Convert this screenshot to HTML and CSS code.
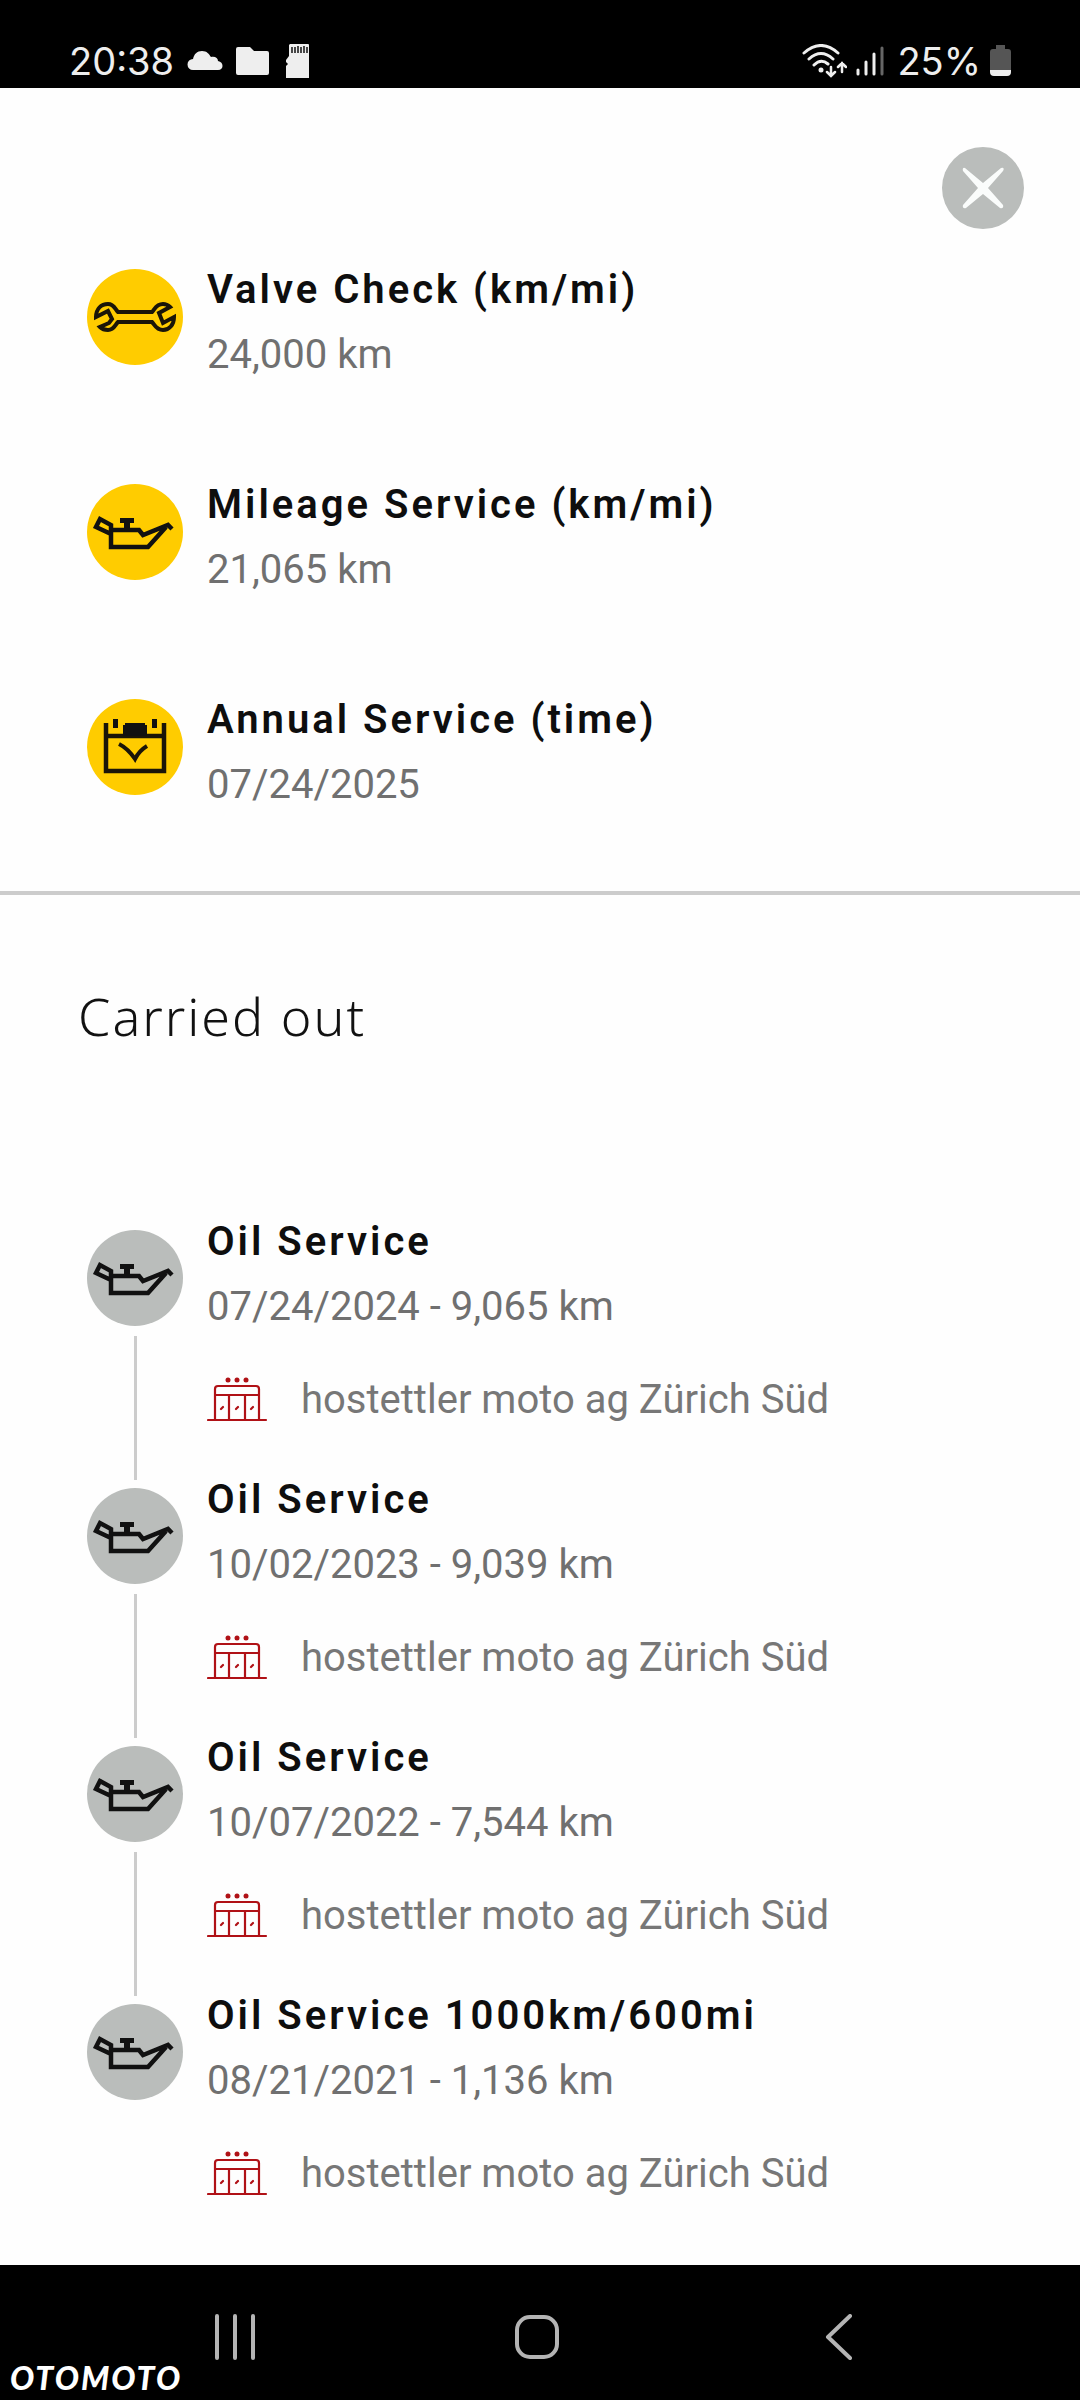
FILE: index.html
```
<!DOCTYPE HTML>
<html lang="en">
<head>
    <meta charset="UTF-8">
    <title>Service history</title>
    <meta name="viewport" content="width=device-width">
    <link rel="stylesheet" href="styles.css">
</head>
<body>
    <!-- icons -->
    <svg class="sprite" aria-hidden="true">
        <symbol id="wrench" viewBox="0 0 96 96">
            <path d="M9 48C9 40 14 35 21 35C27 35 28 40 31 43H65C68 40 69 35 76 35C79 35 81 36 83 38L72 44L76 54L87 48C87 56 82 61 76 61C69 61 68 56 65 53H31C28 56 27 61 21 61C17 61 15 60 13 58L22 54L25 50L21 42Z" fill="none" stroke="#1a1508" stroke-width="4" stroke-linejoin="miter"/>
        </symbol>
        <symbol id="oil" viewBox="0 0 96 96">
            <path d="M24 46H52L56 51L81 41L85 45M79 43L61 63H24V41L13 35L9 43L24 50" fill="none" stroke="#111" stroke-width="4.500"/>
            <path d="M33 34H47V39H43V46H37V39H33Z" fill="#111"/>
        </symbol>
        <symbol id="calendar" viewBox="0 0 96 96">
            <path d="M19 24V72H77V24M19 37H77" fill="none" stroke="#1a1508" stroke-width="4.500"/>
            <path d="M26 20H31V29H26ZM65 20H70V29H65ZM38 24H58V26H60V37H36V26H38Z" fill="#111"/>
            <path d="M32 45C38 48 44 54 48 60C51 54 55 50 60 47" fill="none" stroke="#1a1508" stroke-width="4"/>
        </symbol>
        <symbol id="shop" viewBox="0 0 61 46">
            <g fill="none" stroke="#b01116" stroke-width="2.200">
                <path d="M8 43V12Q8 9 11 9H49Q52 9 52 12V43M8 18H52M22 18V43M38 18V43"/>
                <path d="M1 43H59M14 32L16 30M29 32L31 30M44 32L46 30" stroke-linecap="round"/>
            </g>
            <g fill="#b01116">
                <circle cx="21" cy="3" r="2.500"/>
                <circle cx="30" cy="3" r="2.500"/>
                <circle cx="39" cy="3" r="2.500"/>
            </g>
        </symbol>
    </svg>

    <div class="status">
        <div class="status-left">
            <span class="time">20:38</span>
            <svg width="36" height="34" viewBox="0 0 36 34"><path d="M6 26A5.500 5.500 0 0 1 6 15C7 10 10 7 15 7C20 7 22 10 24 13C28 12 31 14 31 17C37 18 37 26 31 26Z" fill="#eee"/></svg>
            <svg width="33" height="34" viewBox="0 0 33 34"><path d="M2 3H14L18 7H31Q33 7 33 9V29Q33 31 31 31H2Q0 31 0 29V5Q0 3 2 3Z" fill="#eee"/></svg>
            <svg width="23" height="34" viewBox="0 0 23 34"><path d="M4 0H22Q23 0 23 1V34H0V22L2 20L0 18V16L3 12V1Z" fill="#eee"/><path d="M6 3V9M9 3V9M12 2V9M15 3V9M18 2V9M21 3V9" stroke="#111" stroke-width="1.500"/></svg>
        </div>
        <div class="status-right">
            <svg width="45" height="34" viewBox="0 0 45 34">
                <g fill="none" stroke="#eee" stroke-width="3" stroke-linecap="round">
                    <path d="M2 9Q19 -6 36 9M7 15Q19 4 31 15M12 21Q19 14 26 20"/>
                    <path d="M29 23V31M25 28L29 32L33 28M40 28V19M36 23L40 19L44 23" stroke-width="2.500"/>
                </g>
                <circle cx="19" cy="26" r="2.500" fill="#eee"/>
            </svg>
            <svg width="28" height="34" viewBox="0 0 28 34">
                <path d="M2 26V30M10 18V30M18 10V30" stroke="#eee" stroke-width="3" stroke-linecap="round"/>
                <path d="M26 4V30" stroke="#666" stroke-width="3" stroke-linecap="round"/>
            </svg>
            <span class="battery">25%</span>
            <svg width="21" height="34" viewBox="0 0 21 34">
                <path d="M6 1H15V5H18Q21 5 21 8V26H0V8Q0 5 3 5H6Z" fill="#555"/>
                <path d="M0 26H21V28Q21 32 17 32H4Q0 32 0 28Z" fill="#eee"/>
            </svg>
        </div>
    </div>

    <main class="content">
        <div class="top">
            <button class="close" type="button" aria-label="Close">
                <svg width="42" height="42" viewBox="0 0 42 42"><path d="M3 1L21 16L39 1Q43 0 41 4L26 21L41 38Q42 42 38 41L21 27L4 41Q0 42 1 38L16 21L1 4Q0 0 3 1Z" fill="#fafcfb"/></svg>
            </button>
        </div>
        <ul class="next">
            <li>
                <svg class="mark"><use href="#wrench"/></svg>
                <div>
                    <h3>Valve Check (km/mi)</h3>
                    <p>24,000 km</p>
                </div>
            </li>
            <li>
                <svg class="mark"><use href="#oil"/></svg>
                <div>
                    <h3>Mileage Service (km/mi)</h3>
                    <p>21,065 km</p>
                </div>
            </li>
            <li>
                <svg class="mark"><use href="#calendar"/></svg>
                <div>
                    <h3>Annual Service (time)</h3>
                    <p>07/24/2025</p>
                </div>
            </li>
        </ul>

        <h2>Carried out</h2>
        <ul class="done">
            <li>
                <div class="track"><svg class="mark"><use href="#oil"/></svg></div>
                <div>
                    <h3>Oil Service</h3>
                    <p>07/24/2024 - 9,065 km</p>
                    <p class="dealer"><svg><use href="#shop"/></svg>hostettler moto ag Zürich Süd</p>
                </div>
            </li>
            <li>
                <div class="track"><svg class="mark"><use href="#oil"/></svg></div>
                <div>
                    <h3>Oil Service</h3>
                    <p>10/02/2023 - 9,039 km</p>
                    <p class="dealer"><svg><use href="#shop"/></svg>hostettler moto ag Zürich Süd</p>
                </div>
            </li>
            <li>
                <div class="track"><svg class="mark"><use href="#oil"/></svg></div>
                <div>
                    <h3>Oil Service</h3>
                    <p>10/07/2022 - 7,544 km</p>
                    <p class="dealer"><svg><use href="#shop"/></svg>hostettler moto ag Zürich Süd</p>
                </div>
            </li>
            <li>
                <div class="track"><svg class="mark"><use href="#oil"/></svg></div>
                <div>
                    <h3>Oil Service 1000km/600mi</h3>
                    <p>08/21/2021 - 1,136 km</p>
                    <p class="dealer"><svg><use href="#shop"/></svg>hostettler moto ag Zürich Süd</p>
                </div>
            </li>
        </ul>
    </main>

    <footer class="bottom">
        <nav class="keys">
            <button type="button" aria-label="Recent apps"><svg width="46" height="46" viewBox="0 0 46 46"><path d="M5 2V44M23 2V44M41 2V44"/></svg></button>
            <button type="button" aria-label="Home"><svg width="46" height="46" viewBox="0 0 46 46"><rect x="3" y="3" width="40" height="40" rx="13"/></svg></button>
            <button type="button" aria-label="Back"><svg width="46" height="46" viewBox="0 0 46 46"><path d="M34 2L12 23L34 44"/></svg></button>
        </nav>
        <span class="brand">OTOMOTO</span>
    </footer>
</body>
</html>
```
FILE: styles.css
```
body,h2,h3,p{margin:0;}
ul{margin:0;padding:0;list-style:none;}
button{padding:0;border:none;background:none;cursor:pointer;}
svg{display:block;flex:none;}

body{
    display:flex;
    flex-direction:column;
    min-height:100vh;
    font-family:Roboto,"Liberation Sans",sans-serif;
    font-size:40px;
    line-height:65px;
    color:#707070;
    background-color:#fefefe;
}
.sprite{
    position:absolute;
    width:0;
    height:0;
}

/* status bar */
.status{
    display:flex;
    justify-content:space-between;
    height:88px;
    padding:0 69px;
    box-sizing:border-box;
    font-family:Inter,sans-serif;
    font-size:38px;
    color:#eee;
    background-color:#000;
}
.status-left,
.status-right{
    display:flex;
    align-items:center;
    padding-top:34px;
}
.status-left{
    gap:13px;
}
.status-right{
    gap:9px;
}
.status-left svg:last-child{
    margin-left:4px;
}
.battery{
    margin-left:4px;
}

/* content */
.content{
    flex:1;
}
.top{
    display:flex;
    justify-content:flex-end;
    padding:59px 56px 28px;
}
.close{
    display:flex;
    align-items:center;
    justify-content:center;
    width:82px;
    height:82px;
    border-radius:50%;
    background-color:#babdbb;
}
h2{
    padding:86px 78px 0;
    font-family:"Noto Sans","Open Sans",sans-serif;
    font-size:52px;
    font-weight:300;
    line-height:70px;
    letter-spacing:2px;
    color:#111;
}
h3{
    font-size:40px;
    font-weight:600;
    line-height:65px;
    letter-spacing:3px;
    color:#0e0e0e;
}
.mark{
    width:96px;
    height:96px;
    border-radius:50%;
    background-color:#fc0;
}
.next,
.done{
    padding:0 87px;
}
.next{
    display:flex;
    flex-direction:column;
    gap:85px;
    padding-bottom:74px;
    border-bottom:4px solid #ccc;
}
.next li,
.done li{
    display:flex;
    gap:24px;
}
.next .mark{
    margin-top:12px;
}

/* timeline */
.done{
    padding-top:158px;
}
.done li{
    padding-bottom:35px;
}
.done .mark{
    background-color:#babdbb;
}
.track{
    display:flex;
    flex-direction:column;
    align-items:center;
    gap:10px;
    margin:21px 0 -48px;
}
.done li:not(:last-child) .track::after{
    content:'';
    flex:1;
    width:3px;
    background-color:#ccc;
}
.dealer{
    display:flex;
    align-items:center;
    gap:33px;
    margin-top:28px;
    color:#777;
}
.dealer svg{
    width:61px;
    height:46px;
}

/* navigation bar */
.bottom{
    position:relative;
    height:135px;
    background-color:#000;
}
.keys{
    display:flex;
    justify-content:space-between;
    padding:49px 218px 0 212px;
}
.keys svg{
    fill:none;
    stroke:#b4b4b4;
    stroke-width:4;
    stroke-linecap:round;
    stroke-linejoin:round;
}
.brand{
    position:absolute;
    left:10px;
    bottom:4px;
    font-family:Lato,sans-serif;
    font-size:32px;
    font-style:italic;
    font-weight:900;
    line-height:36px;
    letter-spacing:2px;
    color:#fff;
}
```
